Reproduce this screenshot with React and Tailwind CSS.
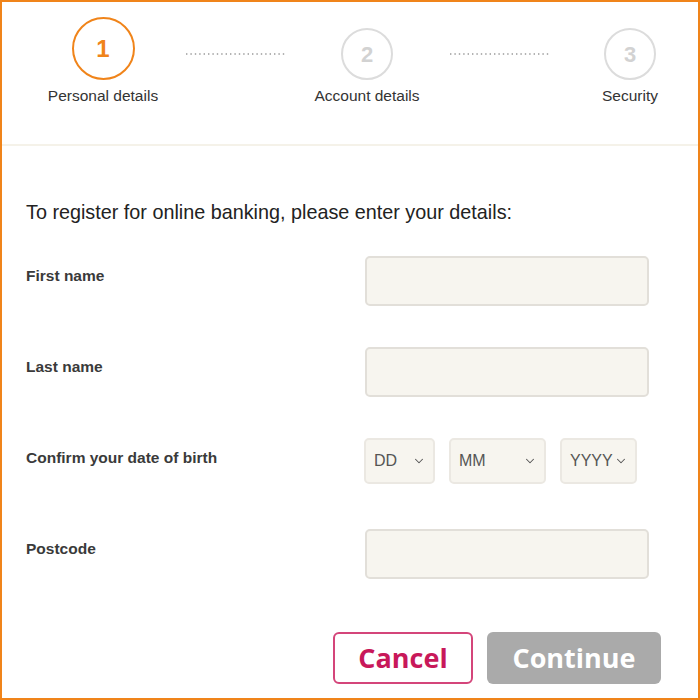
import React from 'react';
import { ChevronDown } from 'lucide-react';

const steps = [
  { n: 1, label: 'Personal details', active: true },
  { n: 2, label: 'Account details' },
  { n: 3, label: 'Security' },
];

function Dots() {
  return (
    <svg width="100" height="4" className="mb-[49px]">
      <line x1="1" y1="2" x2="100" y2="2" stroke="#9a9a9a" strokeWidth="1.6" strokeDasharray="1.4 3" />
    </svg>
  );
}

function Step({ n, label, active }) {
  return (
    <div className="w-[120px] flex flex-col items-center">
      {active ? (
        <div className="w-[63px] h-[63px] rounded-full border-[2.5px] border-[#f0841a] flex items-center justify-center text-[#f0841a] text-[24px] font-bold">
          {n}
        </div>
      ) : (
        <div className="w-[52px] h-[52px] rounded-full border-[2.5px] border-[#dcdcdc] flex items-center justify-center text-[#d2d2d2] text-[22px] font-bold">
          {n}
        </div>
      )}
      <div className="mt-[7px] text-[15.5px] leading-[18px] text-[#333]">{label}</div>
    </div>
  );
}

function Field({ label, children }) {
  return (
    <div className="flex h-[50px]">
      <div className="flex-1 pt-[11px] text-[15.5px] leading-[18px] font-bold text-[#3a3a3a]">{label}</div>
      <div className="w-[284px]">{children}</div>
    </div>
  );
}

function TextBox() {
  return <input className="w-full h-[50px] rounded-[5px] border-2 border-[#e2dfd9] bg-[#f7f5ef] outline-none" />;
}

function Select({ text, width }) {
  return (
    <div className={`${width} h-[46px] rounded-[5px] border-2 border-[#ebe8e2] bg-[#f7f5ef] flex items-center justify-between pl-[8px] pr-[7px] text-[16px] text-[#555]`}>
      <span>{text}</span>
      <ChevronDown size={14} strokeWidth={1.8} color="#555" />
    </div>
  );
}

export default function App() {
  return (
    <div className="w-[700px] h-[700px] border-2 border-[#f0841a] bg-white overflow-hidden" style={{ fontFamily: '"Liberation Sans", Arial, sans-serif' }}>
      <div className="h-[142px] pt-[15px] pl-[41px] flex items-start">
        <div className="flex items-end">
          <Step {...steps[0]} />
          <div className="w-[144px] flex justify-center"><Dots /></div>
          <Step {...steps[1]} />
          <div className="w-[143px] flex justify-center"><Dots /></div>
          <Step {...steps[2]} />
        </div>
      </div>
      <div className="h-[2px] bg-[#f5f2e9]" />

      <div className="pl-[24px] pr-[49px] pt-[54px]">
        <p className="text-[19.8px] leading-[24px] text-[#222]">To register for online banking, please enter your details:</p>
        <div className="mt-[32px] flex flex-col gap-[41px]">
          <Field label="First name"><TextBox /></Field>
          <Field label="Last name"><TextBox /></Field>
          <Field label="Confirm your date of birth">
            <div className="flex gap-[14px] -ml-px">
              <Select text="DD" width="w-[71px]" />
              <Select text="MM" width="w-[97px]" />
              <Select text="YYYY" width="w-[77px]" />
            </div>
          </Field>
          <Field label="Postcode"><TextBox /></Field>
        </div>
      </div>

      <div className="mt-[53px] pr-[37px] flex justify-end gap-[14px]" style={{ fontFamily: '"Open Sans", sans-serif' }}>
        <button className="w-[140px] h-[52px] rounded-[6px] border-2 border-[#d4457a] text-[#c8185a] text-[27px] font-bold bg-white">Cancel</button>
        <button className="w-[174px] h-[52px] rounded-[6px] bg-[#aaaaaa] text-white text-[27px] font-bold">Continue</button>
      </div>
    </div>
  );
}
